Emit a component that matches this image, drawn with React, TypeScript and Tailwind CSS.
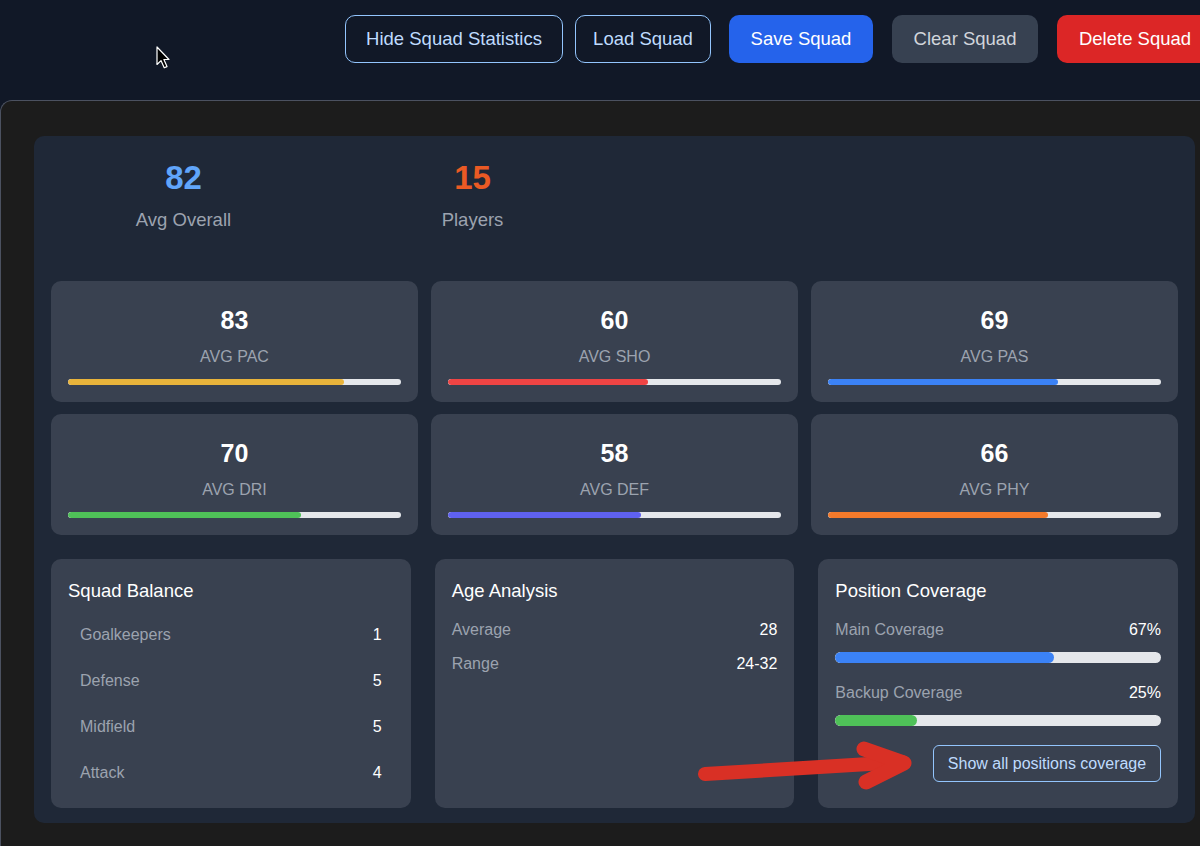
import type { ReactNode } from "react";

const STATS = [
  { value: 83, label: "AVG PAC", bar: "bg-[#e9b43b]" },
  { value: 60, label: "AVG SHO", bar: "bg-[#ef4444]" },
  { value: 69, label: "AVG PAS", bar: "bg-[#3b82f6]" },
  { value: 70, label: "AVG DRI", bar: "bg-[#4fc158]" },
  { value: 58, label: "AVG DEF", bar: "bg-[#5f61f0]" },
  { value: 66, label: "AVG PHY", bar: "bg-[#f47a2b]" },
];

const BALANCE = [
  { label: "Goalkeepers", count: 1 },
  { label: "Defense", count: 5 },
  { label: "Midfield", count: 5 },
  { label: "Attack", count: 4 },
];

function Panel({ title, children }: { title: string; children: ReactNode }) {
  return (
    <div className="flex flex-col rounded-[10px] bg-[#394150] px-[17px] pt-[18px]">
      <h3 className="text-[18.5px] leading-7 font-medium text-white">{title}</h3>
      {children}
    </div>
  );
}

function Cursor() {
  return (
    <svg
      className="absolute left-[156px] top-[46px]"
      width="14"
      height="24"
      viewBox="0 0 14 24"
      aria-hidden="true"
    >
      <path
        d="M1 1 L1 18.5 L5 14.6 L8.2 21.8 L11 20.6 L7.9 13.5 L13 13.5 Z"
        fill="#000"
        stroke="#fff"
        strokeWidth="1.2"
        strokeLinejoin="round"
      />
    </svg>
  );
}

function RedArrow() {
  return (
    <svg
      className="pointer-events-none absolute left-0 top-0"
      width="1200"
      height="846"
      aria-hidden="true"
    >
      <path
        d="M705 774 L902 762"
        stroke="#d93025"
        strokeWidth="14"
        strokeLinecap="round"
        fill="none"
      />
      <path
        d="M864 749 L904 763 L866 782"
        stroke="#d93025"
        strokeWidth="15"
        strokeLinecap="round"
        strokeLinejoin="round"
        fill="none"
      />
    </svg>
  );
}

export default function App() {
  return (
    <div className="relative h-[846px] w-[1200px] overflow-hidden bg-[#111827] font-['Liberation_Sans',Arial,sans-serif]">
      {/* top action bar */}
      <div className="flex h-[100px] items-start pt-[15px] pl-[345px] whitespace-nowrap">
        <button className="h-[48px] w-[218px] shrink-0 rounded-[10px] border border-[#93c5fd] text-[18.5px] text-[#bfdbfe]">
          Hide Squad Statistics
        </button>
        <button className="ml-[12px] h-[48px] w-[136px] shrink-0 rounded-[10px] border border-[#93c5fd] text-[18.5px] text-[#bfdbfe]">
          Load Squad
        </button>
        <button className="ml-[18px] h-[48px] w-[144px] shrink-0 rounded-[10px] bg-[#2563eb] text-[18.5px] text-white">
          Save Squad
        </button>
        <button className="ml-[19px] h-[48px] w-[146px] shrink-0 rounded-[10px] bg-[#374151] text-[18.5px] text-[#d1d5db]">
          Clear Squad
        </button>
        <button className="ml-[19px] h-[48px] w-[156px] shrink-0 rounded-[10px] bg-[#dc2626] text-[18.5px] text-white">
          Delete Squad
        </button>
      </div>

      {/* main panel */}
      <div className="h-[760px] rounded-tl-[12px] border-t border-l border-[#4b5160] bg-[#1c1c1c] pt-[35px] pl-[33px]">
        <div className="w-[1161px] rounded-[10px] bg-[#1f2837] px-[17px] pt-[22px] pb-[15px]">
          {/* headline numbers */}
          <div className="flex gap-[46px] pl-[11px]">
            <div className="flex w-[243px] flex-col items-center">
              <span className="text-[33px] leading-10 font-bold text-[#60a5fa]">82</span>
              <span className="mt-2 text-[18.5px] leading-7 text-[#9ca3af]">Avg Overall</span>
            </div>
            <div className="flex w-[243px] flex-col items-center">
              <span className="text-[33px] leading-10 font-bold text-[#ea5a24]">15</span>
              <span className="mt-2 text-[18.5px] leading-7 text-[#9ca3af]">Players</span>
            </div>
          </div>

          {/* attribute averages */}
          <div className="mt-[47px] grid grid-cols-3 gap-x-[13px] gap-y-3">
            {STATS.map((s) => (
              <div
                key={s.label}
                className="flex flex-col items-center rounded-[10px] bg-[#394150] px-[17px] pt-[23px] pb-[17px]"
              >
                <span className="text-[25px] leading-8 font-bold text-white">{s.value}</span>
                <span className="mt-[9px] text-[16px] leading-6 text-[#9ca3af]">{s.label}</span>
                <div className="mt-[10px] h-[6px] w-full overflow-hidden rounded-full bg-[#e5e7eb]">
                  <div className={`h-full rounded-full ${s.bar}`} style={{ width: `${s.value}%` }} />
                </div>
              </div>
            ))}
          </div>

          {/* detail panels */}
          <div className="mt-6 grid h-[249px] grid-cols-3 gap-6">
            <Panel title="Squad Balance">
              <div className="mt-[7px] flex flex-col">
                {BALANCE.map((b) => (
                  <div key={b.label} className="flex justify-between px-3 py-[11px] text-base leading-6">
                    <span className="text-[#9ca3af]">{b.label}</span>
                    <span className="text-white">{b.count}</span>
                  </div>
                ))}
              </div>
            </Panel>

            <Panel title="Age Analysis">
              <div className="mt-[13px] flex flex-col gap-[10px] text-base leading-6">
                <div className="flex justify-between">
                  <span className="text-[#9ca3af]">Average</span>
                  <span className="text-white">28</span>
                </div>
                <div className="flex justify-between">
                  <span className="text-[#9ca3af]">Range</span>
                  <span className="text-white">24-32</span>
                </div>
              </div>
            </Panel>

            <Panel title="Position Coverage">
              <div className="mt-[13px] flex justify-between text-base leading-6">
                <span className="text-[#9ca3af]">Main Coverage</span>
                <span className="text-white">67%</span>
              </div>
              <div className="mt-[10px] h-[11px] w-full overflow-hidden rounded-full bg-[#e5e7eb]">
                <div className="h-full rounded-full bg-[#3b82f6]" style={{ width: "67%" }} />
              </div>
              <div className="mt-[18px] flex justify-between text-base leading-6">
                <span className="text-[#9ca3af]">Backup Coverage</span>
                <span className="text-white">25%</span>
              </div>
              <div className="mt-[10px] h-[11px] w-full overflow-hidden rounded-full bg-[#e5e7eb]">
                <div className="h-full rounded-full bg-[#4fc158]" style={{ width: "25%" }} />
              </div>
              <div className="mt-[19px] flex justify-end">
                <button className="h-[37px] w-[228px] rounded-[6px] border border-[#93c5fd] text-base text-[#bfdbfe]">
                  Show all positions coverage
                </button>
              </div>
            </Panel>
          </div>
        </div>
      </div>

      <Cursor />
      <RedArrow />
    </div>
  );
}
